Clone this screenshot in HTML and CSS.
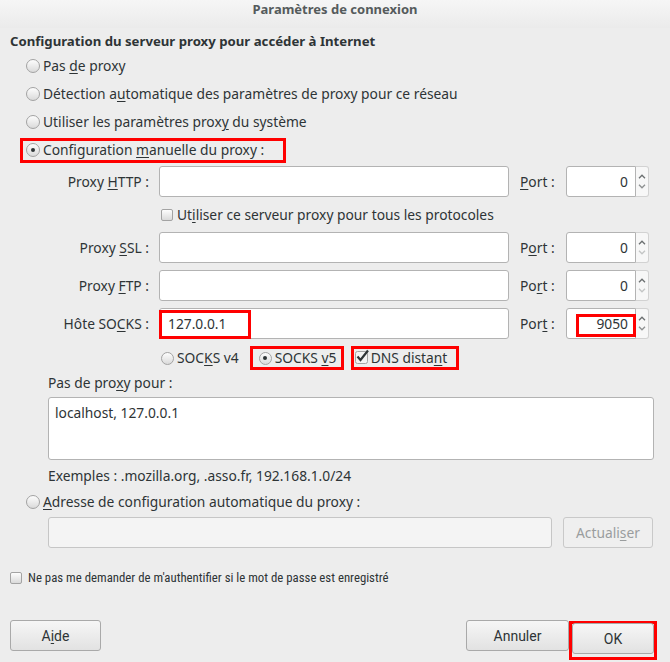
FILE: index.html
```html
<!DOCTYPE html>
<html lang="fr">
<head>
<meta charset="utf-8">
<title>Paramètres de connexion</title>
<link rel="stylesheet" href="styles.css">
</head>
<body>
<div class="dialog">
  <div class="titlebar">Paramètres de connexion</div>
  <div class="content">
    <h1 class="heading">Configuration du serveur proxy pour accéder à Internet</h1>
    <div class="choices">
      <div class="radio-row"><span class="radio"></span><span class="rlabel">Pas <u>d</u>e proxy</span></div>
      <div class="radio-row"><span class="radio"></span><span class="rlabel">Détection a<u>u</u>tomatique des paramètres de proxy pour ce réseau</span></div>
      <div class="radio-row"><span class="radio"></span><span class="rlabel">Utiliser les paramètres prox<u>y</u> du système</span></div>
      <div class="radio-row"><span class="hl hl-manual"><span class="radio on"></span><span class="rlabel">Configuration <u>m</u>anuelle du proxy :</span></span></div>
    </div>

    <div class="manual">
      <div class="proxy-grid">
        <span class="plabel">Proxy <u>H</u>TTP :</span>
        <span class="field"></span>
        <span class="portlabel"><u>P</u>ort :</span>
        <span class="spin"><span class="spin-val">0</span><span class="spin-btns"><svg class="arr" width="8" height="5" viewBox="0 0 8 5"><path d="M1 4.2 4 1.2 7 4.2" fill="none" stroke="#6b6f70" stroke-width="1.3"/></svg><svg class="arr" width="8" height="5" viewBox="0 0 8 5"><path d="M1 0.8 4 3.8 7 0.8" fill="none" stroke="#8d9091" stroke-width="1.3"/></svg></span></span>

        <span></span>
        <span class="check-line span3"><span class="check"></span><span>Ut<u>i</u>liser ce serveur proxy pour tous les protocoles</span></span>

        <span class="plabel">Proxy <u>S</u>SL :</span>
        <span class="field"></span>
        <span class="portlabel">P<u>o</u>rt :</span>
        <span class="spin"><span class="spin-val">0</span><span class="spin-btns"><svg class="arr" width="8" height="5" viewBox="0 0 8 5"><path d="M1 4.2 4 1.2 7 4.2" fill="none" stroke="#6b6f70" stroke-width="1.3"/></svg><svg class="arr" width="8" height="5" viewBox="0 0 8 5"><path d="M1 0.8 4 3.8 7 0.8" fill="none" stroke="#c3c5c5" stroke-width="1.3"/></svg></span></span>

        <span class="plabel">Proxy <u>F</u>TP :</span>
        <span class="field"></span>
        <span class="portlabel">Po<u>r</u>t :</span>
        <span class="spin"><span class="spin-val">0</span><span class="spin-btns"><svg class="arr" width="8" height="5" viewBox="0 0 8 5"><path d="M1 4.2 4 1.2 7 4.2" fill="none" stroke="#6b6f70" stroke-width="1.3"/></svg><svg class="arr" width="8" height="5" viewBox="0 0 8 5"><path d="M1 0.8 4 3.8 7 0.8" fill="none" stroke="#c3c5c5" stroke-width="1.3"/></svg></span></span>

        <span class="plabel">Hôte SO<u>C</u>KS :</span>
        <span class="field field-text">127.0.0.1<span class="mark mark-host"></span></span>
        <span class="portlabel">Por<u>t</u> :</span>
        <span class="spin"><span class="spin-val">9050<span class="mark mark-port"></span></span><span class="spin-btns"><svg class="arr" width="8" height="5" viewBox="0 0 8 5"><path d="M1 4.2 4 1.2 7 4.2" fill="none" stroke="#6b6f70" stroke-width="1.3"/></svg><svg class="arr" width="8" height="5" viewBox="0 0 8 5"><path d="M1 0.8 4 3.8 7 0.8" fill="none" stroke="#8d9091" stroke-width="1.3"/></svg></span></span>

        <span></span>
        <span class="socks-line span3">
          <span class="opt"><span class="radio sm"></span><span>SOC<u>K</u>S v4</span></span>
          <span class="hl hl-v5"><span class="radio sm on"></span><span>SOCKS <u>v</u>5</span></span>
          <span class="hl hl-dns"><svg class="check-svg" width="16" height="16" viewBox="0 0 16 16"><rect x="0.5" y="2.5" width="12" height="12" rx="2" fill="#f3f3f3" stroke="#a4a4a4"/><path d="M2.5 7.5 5.5 11 13 1.5" fill="none" stroke="#2e3436" stroke-width="2.2"/></svg><span>DNS dista<u>n</u>t</span></span>
        </span>
      </div>

      <div class="noproxy-label">Pas de pro<u>x</u>y pour :</div>
      <div class="textarea">localhost, 127.0.0.1</div>
      <div class="examples">Exemples : .mozilla.org, .asso.fr, 192.168.1.0/24</div>
    </div>

    <div class="choices auto">
      <div class="radio-row"><span class="radio"></span><span class="rlabel"><u>A</u>dresse de configuration automatique du proxy :</span></div>
    </div>
    <div class="auto-line">
      <span class="field disabled"></span>
      <span class="btn btn-disabled">Actuali<u>s</u>er</span>
    </div>

    <div class="auth-line"><span class="check"></span><span>Ne pas me demander de m'authentifier si le mot de passe est enregistré</span></div>

    <div class="buttons">
      <span class="btn btn-main">A<u>i</u>de</span>
      <span class="spacer"></span>
      <span class="btn btn-main btn-cancel">Annuler</span>
      <span class="hl hl-ok"><span class="btn btn-main btn-ok">OK</span></span>
    </div>
  </div>
</div>
</body>
</html>
```

FILE: styles.css
```css
html, body {
  margin: 0;
  padding: 0;
}

body {
  background: #ededed;
  color: #2e3436;
  font-family: "Noto Sans", "Open Sans", sans-serif;
  font-size: 13.8px;
  line-height: 18px;
  width: 670px;
  height: 662px;
  overflow: hidden;
}

u {
  text-decoration-thickness: 1px;
  text-underline-offset: 2px;
}

.titlebar {
  height: 28px;
  box-sizing: border-box;
  text-align: center;
  line-height: 18px;
  background: linear-gradient(#f6f6f6, #ebebeb);
  color: #555b5c;
  font-weight: 700;
  font-size: 13px;
}

.content {
  padding: 4px 10px 0 10px;
}

.heading {
  margin: 0;
  font-size: 13.2px;
  line-height: 18px;
  font-weight: 700;
}

.choices {
  margin-top: 2px;
  padding-left: 16px;
}

.radio-row {
  height: 28px;
  display: flex;
  align-items: center;
  gap: 3px;
}

.rlabel {
  display: inline-block;
}

.radio {
  flex: none;
  width: 14px;
  height: 14px;
  box-sizing: border-box;
  border-radius: 50%;
  border: 1px solid #a3a3a3;
  background: linear-gradient(#fdfdfd, #dadada);
  position: relative;
}

.radio.sm {
  width: 13px;
  height: 13px;
}

.radio.on::after {
  content: "";
  position: absolute;
  left: 50%;
  top: 50%;
  width: 4px;
  height: 4px;
  margin: -2px 0 0 -2px;
  border-radius: 50%;
  background: #2e3436;
}

.check {
  flex: none;
  width: 12px;
  height: 12px;
  box-sizing: border-box;
  border: 1px solid #a3a3a3;
  border-radius: 2px;
  background: linear-gradient(#fdfdfd, #dadada);
}

.hl {
  display: inline-flex;
  align-items: center;
  box-sizing: border-box;
  border: 3px solid #f00;
}

.hl-manual {
  height: 25px;
  margin-left: -6px;
  padding-left: 3px;
  padding-right: 19px;
  gap: 3px;
}

.manual {
  margin-left: 38px;
  margin-top: 2px;
}

.proxy-grid {
  display: grid;
  grid-template-columns: 111px 361px 46px 83px;
  row-gap: 7px;
  align-items: center;
}

.plabel {
  text-align: right;
  padding-right: 10px;
}

.span3 {
  grid-column: 2 / span 3;
}

.field {
  display: block;
  width: 350px;
  height: 31px;
  box-sizing: border-box;
  border: 1px solid #b3b3b3;
  border-radius: 3px;
  background: #fff;
  position: relative;
}

.field-text {
  padding-left: 8px;
  line-height: 29px;
}

.spin {
  display: flex;
  height: 31px;
}

.spin-val {
  width: 70px;
  box-sizing: border-box;
  border: 1px solid #b3b3b3;
  border-radius: 3px 0 0 3px;
  background: #fff;
  text-align: right;
  padding-right: 7px;
  line-height: 29px;
  position: relative;
}

.spin-btns {
  width: 13px;
  box-sizing: border-box;
  border: 1px solid #d2d2d2;
  border-left: none;
  border-radius: 0 3px 3px 0;
  background: #f7f7f7;
  display: flex;
  flex-direction: column;
  align-items: center;
  justify-content: space-around;
  padding: 4px 0;
}

.arr {
  display: block;
}

.mark {
  position: absolute;
  box-sizing: border-box;
  border: 3px solid #f00;
  pointer-events: none;
}

.mark-host {
  left: -1px;
  top: 1px;
  width: 92px;
  height: 29px;
}

.mark-port {
  right: -1px;
  top: 5px;
  width: 60px;
  height: 23px;
}

.check-line {
  height: 21px;
  display: flex;
  align-items: center;
  gap: 4px;
  padding-left: 2px;
}

.socks-line {
  height: 24px;
  display: flex;
  align-items: center;
  padding-left: 2px;
}

.opt {
  display: inline-flex;
  align-items: center;
  gap: 3px;
}

.hl-v5 {
  height: 24px;
  width: 94px;
  margin-left: 11px;
  padding-left: 6px;
  gap: 3px;
}

.hl-dns {
  height: 24px;
  width: 108px;
  margin-left: 7px;
  padding-left: 1px;
  gap: 0;
}

.check-svg {
  display: block;
  margin-top: -3px;
}

.noproxy-label {
  margin-top: 4px;
}

.textarea {
  margin-top: 5px;
  width: 606px;
  height: 63px;
  box-sizing: border-box;
  border: 1px solid #b3b3b3;
  border-radius: 3px;
  background: #fff;
  padding: 6px 6px;
}

.examples {
  margin-top: 7px;
}

.choices.auto {
  margin-top: 4px;
}

.choices.auto .radio-row {
  height: 26px;
}

.auto-line {
  margin-top: 2px;
  margin-left: 38px;
  display: flex;
  gap: 11px;
}

.field.disabled {
  width: 504px;
  background: #f4f4f4;
  border-color: #c6c6c6;
}

.btn {
  display: inline-flex;
  align-items: center;
  justify-content: center;
  box-sizing: border-box;
  height: 31px;
  border: 1px solid #a9a9a9;
  border-radius: 3px;
  background: linear-gradient(#f6f6f6, #e2e2e2);
  font-family: "Roboto", "Noto Sans", sans-serif;
  font-size: 14px;
}

.btn-disabled {
  width: 90px;
  color: #9a9d9e;
  border-color: #c9c9c9;
  background: #efefef;
  font-family: "Noto Sans", sans-serif;
  font-size: 13.8px;
}

.auth-line {
  margin-top: 21px;
  display: flex;
  align-items: center;
  gap: 6px;
  height: 18px;
  font-family: "Roboto", "Noto Sans", sans-serif;
  font-stretch: 75%;
  font-size: 12.8px;
}

.buttons {
  margin-top: 33px;
  display: flex;
  align-items: flex-start;
}

.btn-main {
  width: 91px;
}

.btn-cancel {
  width: 103px;
}

.spacer {
  flex: 1;
}

.hl-ok {
  flex: none;
  margin-left: 0;
  margin-right: 3px;
  margin-top: 1px;
  height: 39px;
  width: 88px;
  padding: 0 0 5px 0;
  align-items: flex-start;
  justify-content: center;
}

.btn-ok {
  width: 82px;
  margin-top: -1px;
}
```
